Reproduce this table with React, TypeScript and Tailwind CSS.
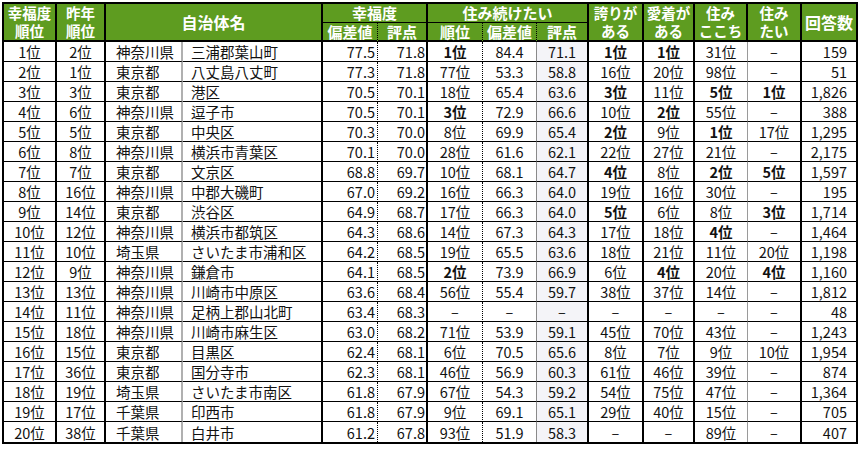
import React from "react";

type Row = string[];

const rows: Row[] = [
  ["1位", "2位", "神奈川県", "三浦郡葉山町", "77.5", "71.8", "1位", "84.4", "71.1", "1位", "1位", "31位", "–", "159"],
  ["2位", "1位", "東京都", "八丈島八丈町", "77.3", "71.8", "77位", "53.3", "58.8", "16位", "20位", "98位", "–", "51"],
  ["3位", "3位", "東京都", "港区", "70.5", "70.1", "18位", "65.4", "63.6", "3位", "11位", "5位", "1位", "1,826"],
  ["4位", "6位", "神奈川県", "逗子市", "70.5", "70.1", "3位", "72.9", "66.6", "10位", "2位", "55位", "–", "388"],
  ["5位", "5位", "東京都", "中央区", "70.3", "70.0", "8位", "69.9", "65.4", "2位", "9位", "1位", "17位", "1,295"],
  ["6位", "8位", "神奈川県", "横浜市青葉区", "70.1", "70.0", "28位", "61.6", "62.1", "22位", "27位", "21位", "–", "2,175"],
  ["7位", "7位", "東京都", "文京区", "68.8", "69.7", "10位", "68.1", "64.7", "4位", "8位", "2位", "5位", "1,597"],
  ["8位", "16位", "神奈川県", "中郡大磯町", "67.0", "69.2", "16位", "66.3", "64.0", "19位", "16位", "30位", "–", "195"],
  ["9位", "14位", "東京都", "渋谷区", "64.9", "68.7", "17位", "66.3", "64.0", "5位", "6位", "8位", "3位", "1,714"],
  ["10位", "12位", "神奈川県", "横浜市都筑区", "64.3", "68.6", "14位", "67.3", "64.3", "17位", "18位", "4位", "–", "1,464"],
  ["11位", "10位", "埼玉県", "さいたま市浦和区", "64.2", "68.5", "19位", "65.5", "63.6", "18位", "21位", "11位", "20位", "1,198"],
  ["12位", "9位", "神奈川県", "鎌倉市", "64.1", "68.5", "2位", "73.9", "66.9", "6位", "4位", "20位", "4位", "1,160"],
  ["13位", "13位", "神奈川県", "川崎市中原区", "63.6", "68.4", "56位", "55.4", "59.7", "38位", "37位", "14位", "–", "1,812"],
  ["14位", "11位", "神奈川県", "足柄上郡山北町", "63.4", "68.3", "–", "–", "–", "–", "–", "–", "–", "48"],
  ["15位", "18位", "神奈川県", "川崎市麻生区", "63.0", "68.2", "71位", "53.9", "59.1", "45位", "70位", "43位", "–", "1,243"],
  ["16位", "15位", "東京都", "目黒区", "62.4", "68.1", "6位", "70.5", "65.6", "8位", "7位", "9位", "10位", "1,954"],
  ["17位", "36位", "東京都", "国分寺市", "62.3", "68.1", "46位", "56.9", "60.3", "61位", "46位", "39位", "–", "874"],
  ["18位", "19位", "埼玉県", "さいたま市南区", "61.8", "67.9", "67位", "54.3", "59.2", "54位", "75位", "47位", "–", "1,364"],
  ["19位", "17位", "千葉県", "印西市", "61.8", "67.9", "9位", "69.1", "65.1", "29位", "40位", "15位", "–", "705"],
  ["20位", "38位", "千葉県", "白井市", "61.2", "67.8", "93位", "51.9", "58.3", "–", "–", "89位", "–", "407"],
];

const colCls: string[] = [
  "justify-center border-r-2 border-r-black",
  "justify-center border-r-2 border-r-black",
  "justify-start pl-[10px] border-r-2 border-r-[#b0b0b0]",
  "justify-start pl-[8px] border-r-2 border-r-black",
  "justify-end pr-[2px] border-r border-r-black [border-right-style:dotted]",
  "justify-end pr-[1px] border-r-2 border-r-black",
  "justify-center border-r border-r-black [border-right-style:dotted]",
  "justify-center border-r border-r-[#8a8a8a]",
  "justify-center border-r-2 border-r-black bg-[#f4f4f8]",
  "justify-center border-r-2 border-r-black",
  "justify-center border-r-2 border-r-black",
  "justify-center border-r border-r-[#9a9a9a]",
  "justify-center border-r-2 border-r-black",
  "justify-end pr-[9px]",
];

const boldCols = [6, 9, 10, 11, 12];

function isBold(ci: number, v: string): boolean {
  if (!boldCols.includes(ci)) return false;
  const n = parseInt(v, 10);
  return !isNaN(n) && n <= 5;
}

const hd =
  "flex items-center justify-center text-center text-white font-bold bg-[#5e9c20] border-r-2 border-r-black";
const hdDot =
  "flex items-center justify-center text-center text-white font-bold bg-[#5e9c20] border-r border-r-black [border-right-style:dotted]";

export default function App() {
  return (
    <div
      className="w-[866px] h-[450px] bg-white pt-[2px] pl-[2px]"
      style={{ fontFamily: '"Noto Sans CJK JP", "Noto Sans", sans-serif' }}
    >
      <div className="grid w-[856px] border-2 border-black grid-cols-[53px_49px_77px_140px_55px_50px_55px_54px_52px_55px_51px_53px_54px_54px] grid-rows-[19px_19px_repeat(20,20px)] text-[#111] text-[14.5px]">
        {/* header */}
        <div className={`${hd} row-span-2 border-b-2 border-b-black text-[14.5px] leading-[18px]`}>
          幸福度
          <br />
          順位
        </div>
        <div className={`${hd} row-span-2 border-b-2 border-b-black text-[14.5px] leading-[18px]`}>
          昨年
          <br />
          順位
        </div>
        <div className={`${hd} col-span-2 row-span-2 border-b-2 border-b-black text-[16px]`}>自治体名</div>
        <div className={`${hd} col-span-2 border-b border-b-black text-[15px] leading-[18px]`}>幸福度</div>
        <div className={`${hd} col-span-3 border-b border-b-black text-[15px] leading-[18px]`}>住み続けたい</div>
        <div className={`${hd} row-span-2 border-b-2 border-b-black text-[14.5px] leading-[18px]`}>
          誇りが
          <br />
          ある
        </div>
        <div className={`${hd} row-span-2 border-b-2 border-b-black text-[14.5px] leading-[18px]`}>
          愛着が
          <br />
          ある
        </div>
        <div className={`${hd} row-span-2 border-b-2 border-b-black text-[14.5px] leading-[18px]`}>
          住み
          <br />
          ここち
        </div>
        <div className={`${hd} row-span-2 border-b-2 border-b-black text-[14.5px] leading-[18px]`}>
          住み
          <br />
          たい
        </div>
        <div className="flex items-center justify-center text-white font-bold bg-[#5e9c20] row-span-2 border-b-2 border-b-black text-[16px]">
          回答数
        </div>
        <div className={`${hdDot} border-b-2 border-b-black text-[15px] leading-[17px]`}>偏差値</div>
        <div className={`${hd} border-b-2 border-b-black text-[15px] leading-[17px]`}>評点</div>
        <div className={`${hdDot} border-b-2 border-b-black text-[15px] leading-[17px]`}>順位</div>
        <div className={`${hdDot} border-b-2 border-b-black text-[15px] leading-[17px]`}>偏差値</div>
        <div className={`${hd} border-b-2 border-b-black text-[15px] leading-[17px]`}>評点</div>

        {/* body */}
        {rows.map((r, ri) =>
          r.map((v, ci) => (
            <div
              key={`${ri}-${ci}`}
              className={`flex items-center leading-[19px] whitespace-nowrap ${colCls[ci]} ${
                ri < rows.length - 1 ? "border-b border-b-black" : ""
              } ${isBold(ci, v) ? "font-bold" : ""}`}
            >
              {v}
            </div>
          ))
        )}
      </div>
    </div>
  );
}
